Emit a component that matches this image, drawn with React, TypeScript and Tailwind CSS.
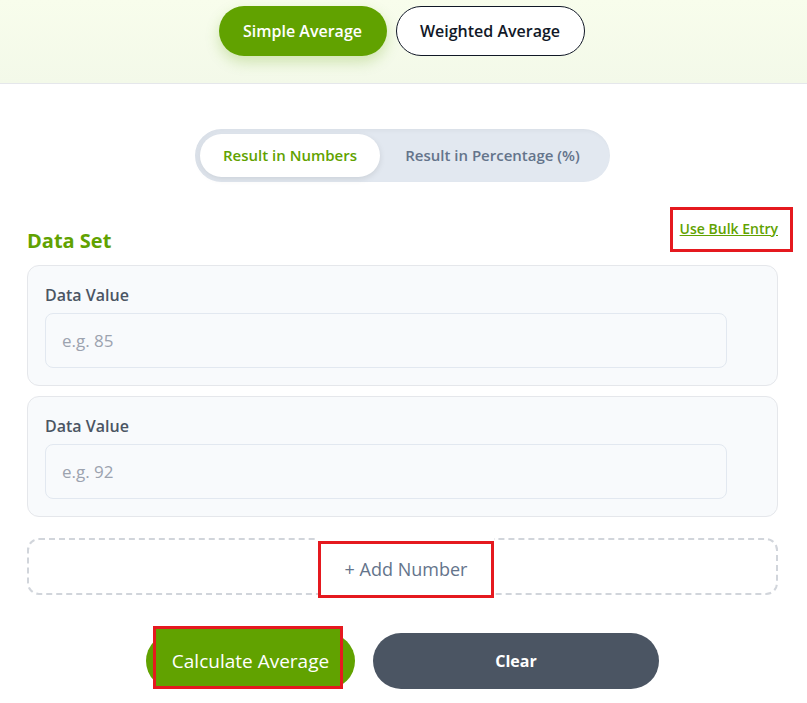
import * as React from "react"

const font = { fontFamily: '"Open Sans", "Noto Sans", Arial, sans-serif' }

function DataRow({ placeholder }: { placeholder: string }) {
  return (
    <div className="rounded-[12px] border border-[#e5e7eb] bg-[#f8fafc] pt-[17px] pb-[17px] pl-[17px] pr-[50px]">
      <label className="block text-[16px] font-semibold leading-[24px] text-[#4b5563]">Data Value</label>
      <input
        className="mt-[6px] block h-[55px] w-full rounded-[8px] border border-[#e2e8f0] bg-[#f8fafc] px-[16px] text-[17px] text-[#374151] outline-none placeholder:text-[#9ca3af]"
        placeholder={placeholder}
      />
    </div>
  )
}

export default function App() {
  const [mode, setMode] = React.useState<'simple' | 'weighted'>('simple')
  const [unit, setUnit] = React.useState<'num' | 'pct'>('num')
  const [rows, setRows] = React.useState(['e.g. 85', 'e.g. 92'])

  return (
    <div className="min-h-screen bg-white" style={font}>
      {/* calculator type switch */}
      <div className="flex h-[84px] justify-center gap-[9px] border-b border-[#e5e7eb] bg-gradient-to-b from-[#f8fdec] to-[#f3f9e9] pt-[6px] pr-[4px]">
        <button
          onClick={() => setMode('simple')}
          className={`h-[50px] w-[168px] rounded-full text-[16px] font-semibold ${mode === 'simple' ? 'bg-[#61a200] text-white shadow-[0_6px_14px_rgba(97,162,0,0.25)]' : 'border border-[#111827] bg-white text-[#111827]'}`}
        >
          Simple Average
        </button>
        <button
          onClick={() => setMode('weighted')}
          className={`h-[50px] w-[189px] rounded-full text-[16px] font-semibold ${mode === 'weighted' ? 'bg-[#61a200] text-white' : 'border border-[#111827] bg-white text-[#111827]'}`}
        >
          Weighted Average
        </button>
      </div>

      <div className="pl-[27px] pr-[29px] pb-[14px]">
        {/* result format toggle */}
        <div className="mt-[45px] flex justify-center">
          <div className="flex h-[53px] w-[415px] items-center rounded-full bg-[#e2e8f0] p-[5px] shadow-[inset_2px_2px_4px_rgba(0,0,0,0.04)]">
            <button
              onClick={() => setUnit('num')}
              className={`h-[43px] w-[180px] rounded-full text-[15px] font-semibold ${unit === 'num' ? 'bg-white text-[#61a200] shadow-[0_2px_6px_rgba(0,0,0,0.1)]' : 'text-[#64748b]'}`}
            >
              Result in Numbers
            </button>
            <button
              onClick={() => setUnit('pct')}
              className={`h-[43px] flex-1 rounded-full text-[15px] font-semibold ${unit === 'pct' ? 'bg-white text-[#61a200] shadow-[0_2px_6px_rgba(0,0,0,0.1)]' : 'text-[#64748b]'}`}
            >
              Result in Percentage (%)
            </button>
          </div>
        </div>

        {/* data set header */}
        <div className="mt-[25px] flex items-start justify-between">
          <h2 className="mt-[23px] text-[20px] font-bold leading-[22px] text-[#61a200]">Data Set</h2>
          <div className="-mr-[15px] border-[3px] border-[#e5191f] pt-[10px] pb-[12px] pl-[7px] pr-[12px]">
            <a href="#" className="block text-[14px] font-semibold leading-[17px] text-[#61a200] underline">Use Bulk Entry</a>
          </div>
        </div>

        <div className="mt-[13px] flex flex-col gap-[10px]">
          {rows.map((p, i) => (
            <DataRow key={i} placeholder={p} />
          ))}
        </div>

        {/* add another value */}
        <div className="mt-[21px] flex h-[57px] items-center justify-center rounded-[12px] border-2 border-dashed border-[#d1d5db]">
          <button
            onClick={() => setRows([...rows, 'e.g. 78'])}
            className="ml-[7px] flex h-[57px] w-[176px] translate-y-[3px] items-center justify-center border-[3px] border-[#e5191f] bg-white text-[18px] font-medium text-[#64748b] shadow-[0_-5px_0_white]"
          >
            + Add Number
          </button>
        </div>

        {/* actions */}
        <div className="mt-[38px] flex justify-center gap-[18px]">
          <div className="relative flex h-[56px] w-[209px] items-center justify-center rounded-full bg-[#61a200]">
            <span className="absolute -top-[7px] bottom-0 left-[7px] right-[12px] border-[3px] border-[#e5191f] bg-[#61a200]" />
            <span className="relative text-[19px] text-white">Calculate Average</span>
          </div>
          <button
            onClick={() => setRows(['e.g. 85', 'e.g. 92'])}
            className="h-[56px] w-[286px] rounded-full bg-[#4b5563] text-[16px] font-bold text-white"
          >
            Clear
          </button>
        </div>
      </div>
    </div>
  )
}
